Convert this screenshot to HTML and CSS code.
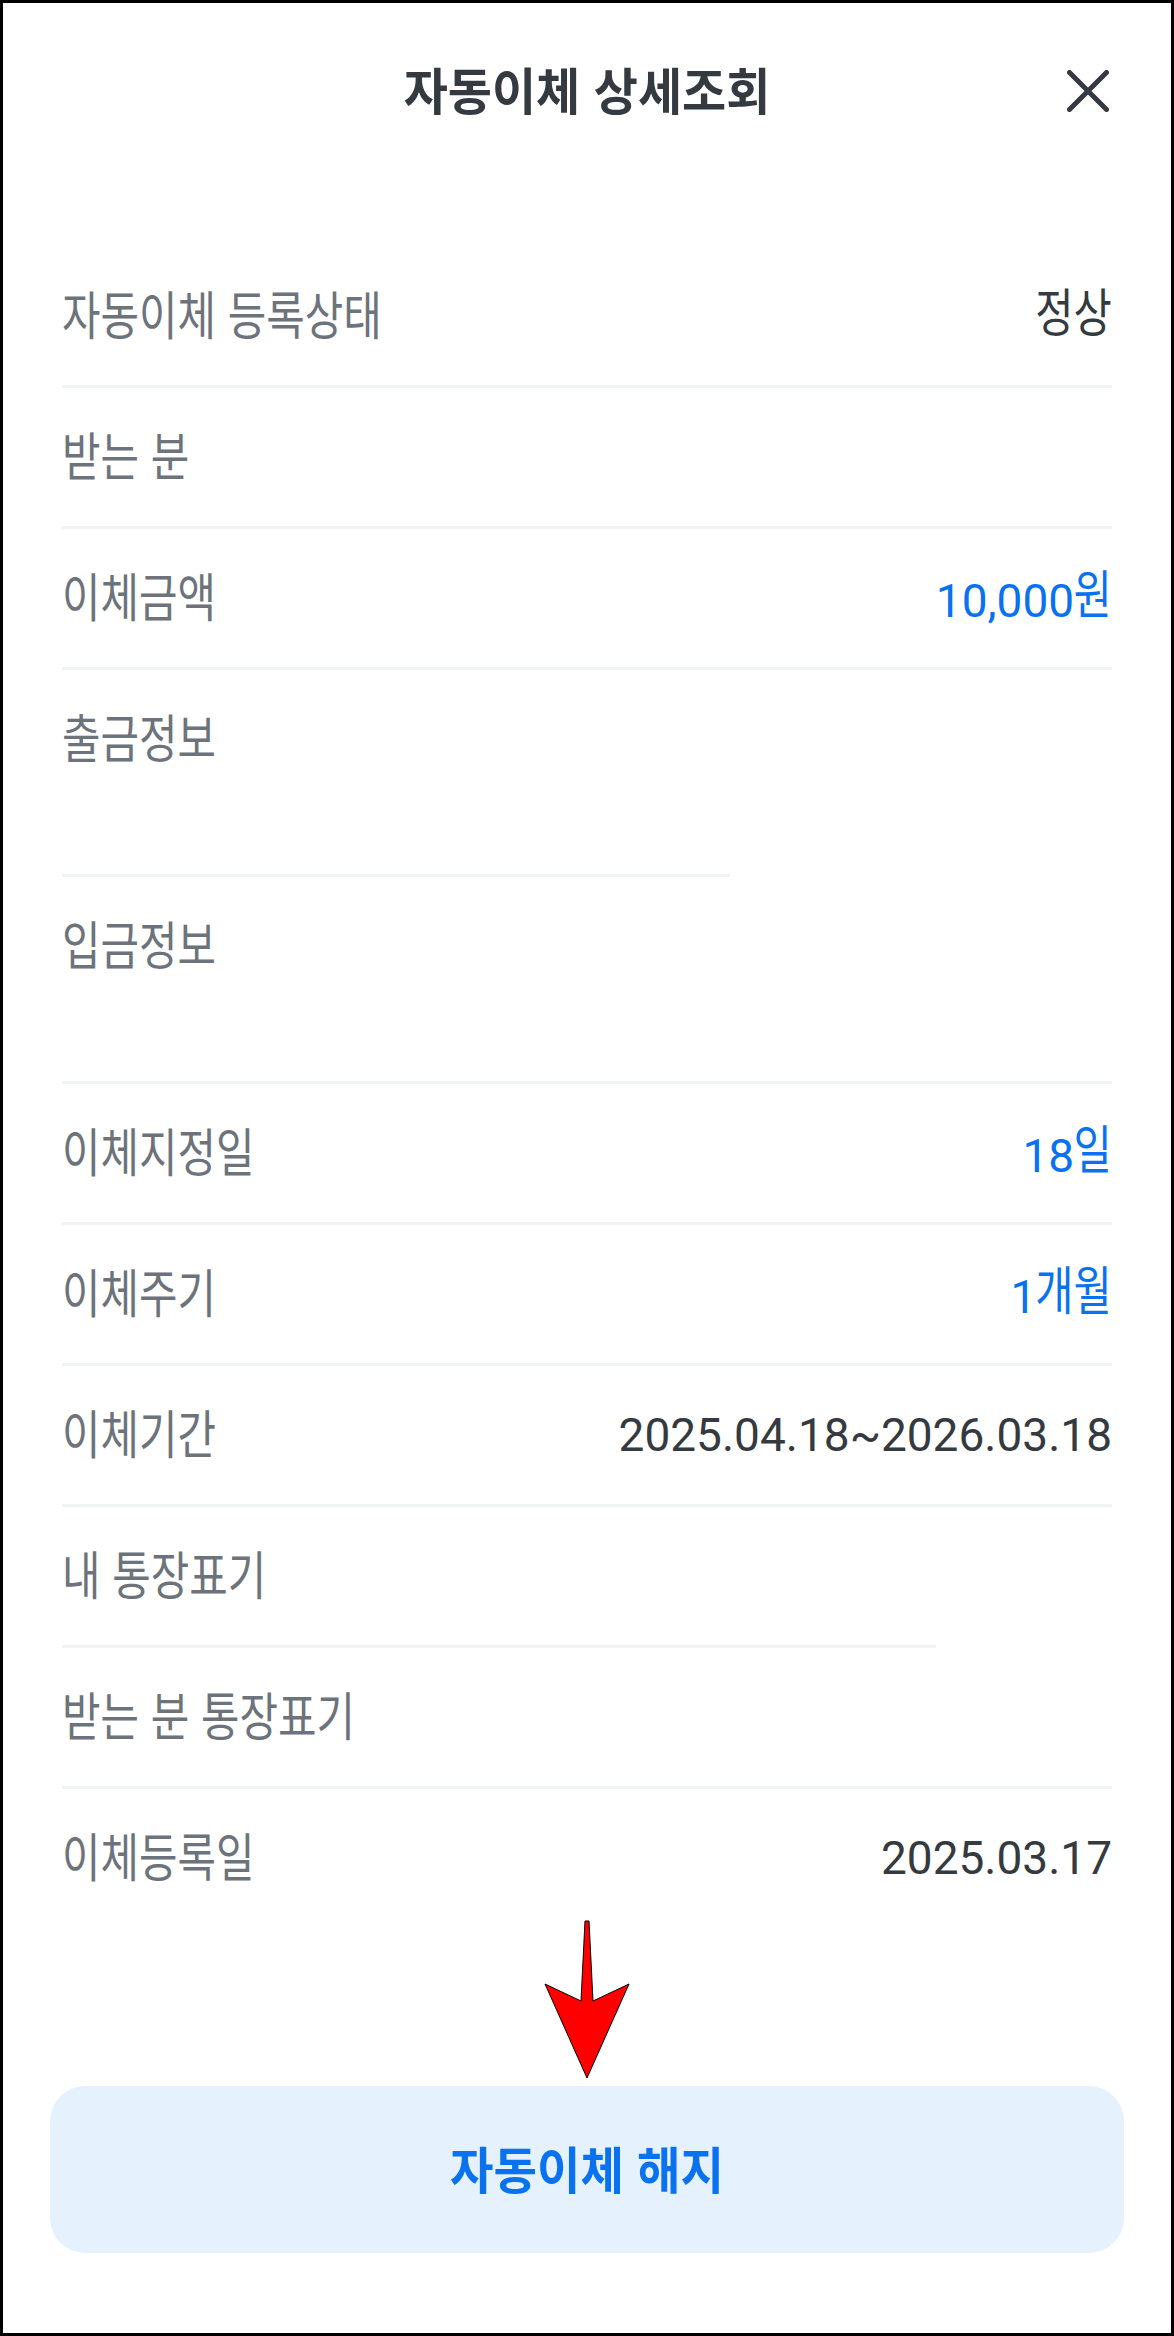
FILE: index.html
```html
<!DOCTYPE html>
<html lang="ko">
<head>
<meta charset="utf-8">
<title>자동이체 상세조회</title>
<link rel="stylesheet" href="styles.css">
</head>
<body>
<div class="screen">
  <header class="header">
    <span class="spacer"></span>
    <h1 class="title">자동이체 상세조회</h1>
    <button class="close" aria-label="닫기">
      <svg width="42" height="42" viewBox="0 0 42 42"><path d="M2.5 2.5L39.5 39.5M39.5 2.5L2.5 39.5" stroke="currentColor" stroke-width="5" stroke-linecap="round" fill="none"/></svg>
    </button>
  </header>

  <section class="details">
    <div class="row"><span class="label">자동이체 등록상태</span><span class="value"><span class="kr">정상</span></span></div>
    <div class="rule"></div>
    <div class="row"><span class="label">받는 분</span></div>
    <div class="rule"></div>
    <div class="row"><span class="label">이체금액</span><span class="value accent">10,000<span class="kr u1">원</span></span></div>
    <div class="rule"></div>
    <div class="row tall"><span class="label">출금정보</span></div>
    <div class="rule rule-account"></div>
    <div class="row tall"><span class="label">입금정보</span></div>
    <div class="rule"></div>
    <div class="row"><span class="label">이체지정일</span><span class="value accent">18<span class="kr u1">일</span></span></div>
    <div class="rule"></div>
    <div class="row"><span class="label">이체주기</span><span class="value accent">1<span class="kr u2">개월</span></span></div>
    <div class="rule"></div>
    <div class="row"><span class="label">이체기간</span><span class="value">2025.04.18~2026.03.18</span></div>
    <div class="rule"></div>
    <div class="row"><span class="label">내 통장표기</span></div>
    <div class="rule rule-memo"></div>
    <div class="row"><span class="label">받는 분 통장표기</span></div>
    <div class="rule"></div>
    <div class="row"><span class="label">이체등록일</span><span class="value">2025.03.17</span></div>
  </section>

  <button class="cancel"><span class="cancel-text">자동이체 해지</span></button>

  <svg class="pointer" width="95" height="170" viewBox="540 1915 95 170">
    <polygon points="585,1921 589,1921 593,2001 629,1984 587,2078 545,1984 581,2001" fill="#ff0000" stroke="#000" stroke-width="1" stroke-linejoin="miter"/>
  </svg>
</div>
</body>
</html>
```

FILE: styles.css
```css
html, body {
  margin: 0;
  padding: 0;
  background: #ffffff;
}

.screen {
  position: relative;
  box-sizing: border-box;
  width: 1174px;
  height: 2336px;
  border: 3px solid #000000;
  background: #ffffff;
  overflow: hidden;
  font-family: "Noto Sans CJK KR", sans-serif;
}

.header {
  height: 176px;
  padding: 0 62px;
  display: grid;
  grid-template-columns: 1fr auto 1fr;
  align-items: center;
}

.title {
  margin: 0;
  display: inline-block;
  font: 700 50px/60px "Noto Sans CJK KR", sans-serif;
  color: #343a40;
  white-space: nowrap;
  transform: translateY(-3px) scaleX(0.96);
}

.close {
  justify-self: end;
  width: 42px;
  height: 42px;
  padding: 0;
  border: 0;
  background: none;
  color: #343a40;
  display: flex;
}

.details {
  margin-top: 68px;
  padding: 0 59px;
  display: flex;
  flex-direction: column;
}

.row {
  height: 138px;
  display: flex;
  align-items: center;
  justify-content: space-between;
}

.row.tall {
  height: 204px;
  align-items: flex-start;
}

.row.tall .label {
  margin-top: 39px;
}

.rule {
  height: 3px;
  background: #f2f3f5;
}

.rule-account {
  width: 668px;
}

.rule-memo {
  width: 874px;
}

.label {
  display: inline-block;
  font: 400 52px/60px "Noto Sans CJK KR", sans-serif;
  color: #6d737b;
  white-space: nowrap;
  transform: translateY(-3px) scaleX(0.805);
  transform-origin: left center;
}

.value {
  font: 400 46px/60px Roboto, "Noto Sans CJK KR", sans-serif;
  color: #343a40;
  white-space: nowrap;
}

.value.accent {
  color: #0a72ef;
}

.kr {
  display: inline-block;
  font-family: "Noto Sans CJK KR", sans-serif;
  font-size: 52px;
  transform: translateY(-3px) scaleX(0.8);
  transform-origin: right center;
}

.kr.u1 {
  margin-left: -10px;
}

.kr.u2 {
  margin-left: -20px;
}

.cancel {
  display: flex;
  align-items: center;
  justify-content: center;
  box-sizing: border-box;
  margin: 159px 47px 0;
  width: calc(100% - 94px);
  height: 167px;
  border: 0;
  border-radius: 35px;
  background: #e5f2fd;
  padding: 0;
}

.cancel-text {
  display: inline-block;
  font: 700 50px/60px "Noto Sans CJK KR", sans-serif;
  color: #0a72ef;
  white-space: nowrap;
  transform: translateY(-3px) scaleX(0.945);
}

.pointer {
  position: absolute;
  left: 537px;
  top: 1912px;
}
```
